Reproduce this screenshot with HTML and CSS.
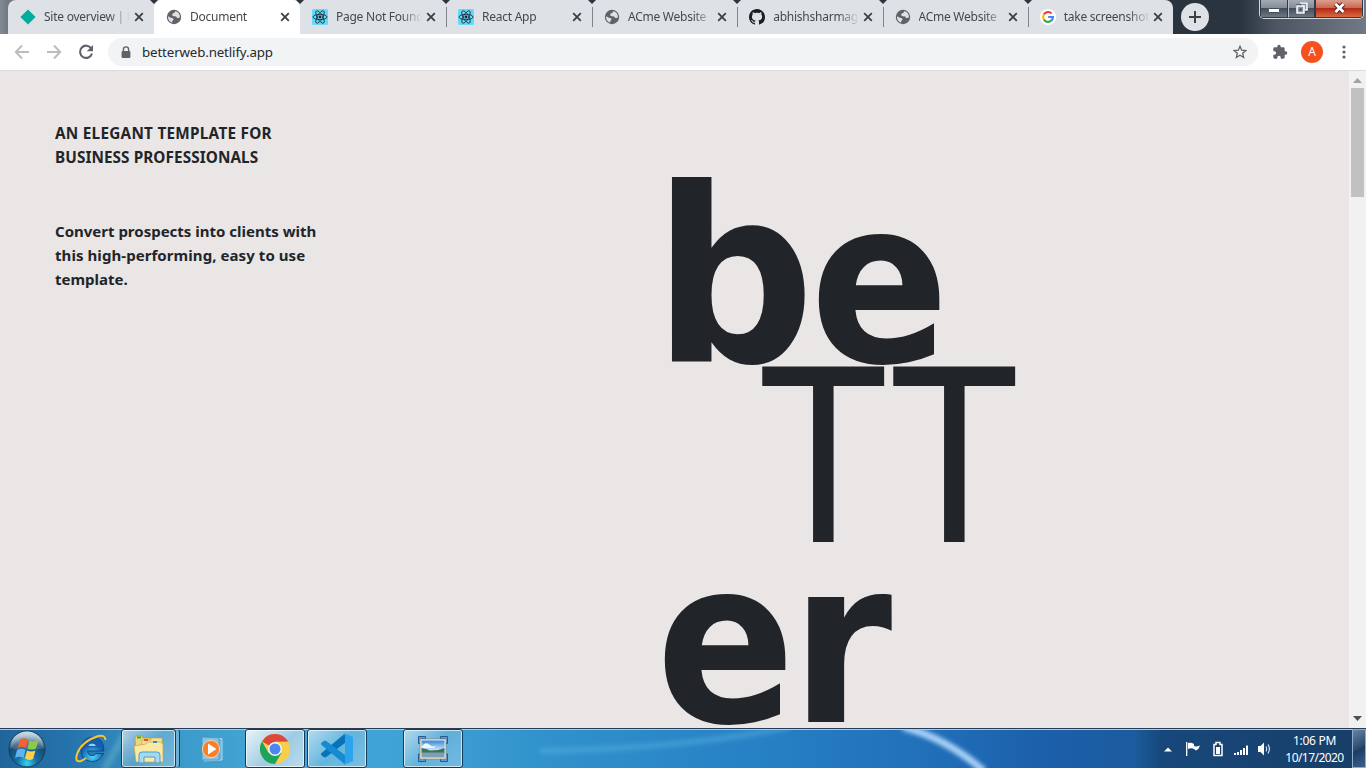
FILE: index.html
```html
<!DOCTYPE html>
<html lang="en">
<head>
<meta charset="utf-8">
<title>Document</title>
<link rel="stylesheet" href="styles.css">
</head>
<body>
<svg width="0" height="0" class="defs">
  <defs>
    <symbol id="x" viewBox="0 0 10 10"><path d="M1.2 1.2 8.8 8.8M8.8 1.2 1.2 8.8" stroke="#3c4043" stroke-width="1.8" fill="none"/></symbol>
    <symbol id="globe" viewBox="0 0 16 16"><circle cx="8" cy="8" r="7.2" fill="#5f6368"/><path d="M9.2 2.2 8.3 4 6.6 4.6 6.2 6.6 7.7 7.3 10.2 7.6 11 9l2.8-.3C14.3 5.500 12.400 2.800 9.200 2.200zM2.200 7.200 4.800 8.800 7 9.300 7.500 10.800 6.300 12 6.200 13.600C3.400 12.900 1.700 10.200 2.200 7.200z" fill="#dee1e6"/></symbol>
    <symbol id="react" viewBox="0 0 16 16"><rect width="16" height="16" rx="1.500" fill="#61dafb"/><g fill="none" stroke="#20232a" stroke-width=".8"><ellipse cx="8" cy="8" rx="7" ry="2.700"/><ellipse cx="8" cy="8" rx="7" ry="2.700" transform="rotate(60 8 8)"/><ellipse cx="8" cy="8" rx="7" ry="2.700" transform="rotate(120 8 8)"/></g><circle cx="8" cy="8" r="1.400" fill="#20232a"/></symbol>
  </defs>
</svg>

<header class="tabstrip">
  <div class="tabs">
    <div class="tab wide"><svg class="fav" viewBox="0 0 16 16"><path d="M8 .4 15.600 8 8 15.600 .4 8z" fill="#00ad9f"/></svg><span class="label">Site overview | b</span><svg class="close"><use href="#x"/></svg></div>
    <div class="tab wide active"><svg class="fav"><use href="#globe"/></svg><span class="label">Document</span><svg class="close"><use href="#x"/></svg></div>
    <div class="tab wide"><svg class="fav"><use href="#react"/></svg><span class="label">Page Not Found</span><svg class="close"><use href="#x"/></svg></div>
    <div class="tab wide sep"><svg class="fav"><use href="#react"/></svg><span class="label">React App</span><svg class="close"><use href="#x"/></svg></div>
    <div class="tab sep"><svg class="fav"><use href="#globe"/></svg><span class="label">ACme Website</span><svg class="close"><use href="#x"/></svg></div>
    <div class="tab sep"><svg class="fav" viewBox="0 0 16 16"><path fill="#1b1f23" fill-rule="evenodd" d="M8 0C3.580 0 0 3.580 0 8c0 3.540 2.290 6.530 5.470 7.590.4.070.55-.17.55-.38 0-.19-.01-.82-.01-1.490-2.010.37-2.530-.49-2.690-.94-.09-.23-.48-.94-.82-1.130-.28-.15-.68-.52-.01-.53.63-.01 1.080.58 1.230.82.72 1.210 1.870.87 2.330.66.070-.52.28-.87.51-1.070-1.780-.2-3.640-.89-3.640-3.950 0-.87.31-1.590.82-2.150-.08-.2-.36-1.020.08-2.120 0 0 .67-.21 2.200.82.64-.18 1.320-.27 2-.27s1.360.09 2 .27c1.530-1.040 2.200-.82 2.200-.82.44 1.100.16 1.920.08 2.120.51.56.82 1.270.82 2.150 0 3.070-1.870 3.750-3.650 3.950.29.25.54.73.54 1.480 0 1.070-.01 1.930-.01 2.200 0 .21.15.46.55.38A8.010 8.010 0 0 0 16 8c0-4.420-3.580-8-8-8z"/></svg><span class="label">abhishsharmag</span><svg class="close"><use href="#x"/></svg></div>
    <div class="tab sep"><svg class="fav"><use href="#globe"/></svg><span class="label">ACme Website</span><svg class="close"><use href="#x"/></svg></div>
    <div class="tab sep"><svg class="fav" viewBox="0 0 16 16"><circle cx="8" cy="8" r="8" fill="#fff"/><g fill="none" stroke-width="2.200"><path d="M11.600 4.500A4.900 4.900 0 0 0 3.800 5.500" stroke="#ea4335"/><path d="M3.800 5.500A4.900 4.900 0 0 0 3.800 10.500" stroke="#fbbc05"/><path d="M3.800 10.500A4.900 4.900 0 0 0 11.200 11.700" stroke="#34a853"/><path d="M11.200 11.700A4.900 4.900 0 0 0 12.900 8H8.200" stroke="#4285f4"/></g></svg><span class="label">take screenshot</span><svg class="close"><use href="#x"/></svg></div>
  </div>
  <div class="newtab"><svg width="12" height="12" viewBox="0 0 12 12"><path d="M6 0V12M0 6H12" stroke="#3c4043" stroke-width="2"/></svg></div>
  <div class="caption">
    <span class="cap"><svg width="12" height="12" viewBox="0 0 12 12"><rect x=".5" y="6.500" width="11" height="4" rx=".8" fill="#fff" stroke="#434a57"/></svg></span>
    <span class="cap restore"><svg width="12" height="12" viewBox="0 0 12 12"><path d="M4 1H11V8H9M1 4H8V11H1z" fill="none" stroke="#303642" stroke-width="3"/><path d="M4 1H11V8H9M1 4H8V11H1z" fill="#8991a0" stroke="#fff" stroke-width="1.600"/><rect x="3.500" y="6.500" width="2" height="2" fill="#303642"/></svg></span>
    <span class="cap shut"><svg width="13" height="12" viewBox="0 0 13 12"><path d="M2.500 2 10.500 10M10.500 2 2.500 10" stroke="#522" stroke-width="4.800"/><path d="M2.500 2 10.500 10M10.500 2 2.500 10" stroke="#fff" stroke-width="2.800"/></svg></span>
  </div>
</header>

<div class="toolbar">
  <div class="nav">
    <svg width="16" height="16" viewBox="0 0 16 16"><path d="M15 8H2M8 1.500 1.800 8 8 14.500" fill="none" stroke="#babcbe" stroke-width="1.900"/></svg>
    <svg width="16" height="16" viewBox="0 0 16 16"><path d="M1 8H14M8 1.500 14.200 8 8 14.500" fill="none" stroke="#babcbe" stroke-width="1.900"/></svg>
    <svg width="16" height="16" viewBox="0 0 16 16"><path d="M13.300 4.500A6.100 6.100 0 1 0 14 9.500" fill="none" stroke="#5f6368" stroke-width="2.100"/><path d="M15 1V7.200H8.800z" fill="#5f6368"/></svg>
  </div>
  <div class="omnibox">
    <svg width="10" height="13" viewBox="0 0 10 13"><path d="M2.400 6V3.500A2.600 2.600 0 0 1 7.600 3.500V6" fill="none" stroke="#5f6368" stroke-width="1.400"/><rect x=".6" y="5" width="8.800" height="7" rx="1" fill="#5f6368"/></svg>
    <span class="url">betterweb.netlify.app</span>
    <svg class="star" width="14" height="14" viewBox="0 0 14 14"><path d="M7 1.300 8.650 5.200 12.900 5.550 9.700 8.350 10.650 12.500 7 10.300 3.350 12.500 4.300 8.350 1.100 5.550 5.350 5.200z" fill="none" stroke="#5f6368" stroke-width="1.300"/></svg>
  </div>
  <svg class="puzzle" width="16" height="16" viewBox="0 0 24 24"><path fill="#5f6368" d="M20.500 11H19V7c0-1.100-.9-2-2-2h-4V3.500a2.500 2.500 0 0 0-5 0V5H4c-1.100 0-2 .9-2 2v3.800h1.500a2.700 2.700 0 0 1 0 5.400H2V20c0 1.100.9 2 2 2h3.800v-1.500a2.700 2.700 0 0 1 5.400 0V22H17c1.100 0 2-.9 2-2v-4h1.500a2.500 2.500 0 0 0 0-5z"/></svg>
  <span class="avatar">A</span>
  <svg class="dots" width="4" height="14" viewBox="0 0 4 14"><g fill="#5f6368"><circle cx="2" cy="2" r="1.600"/><circle cx="2" cy="7" r="1.600"/><circle cx="2" cy="12" r="1.600"/></g></svg>
</div>

<div class="viewport">
  <main class="hero">
    <section class="intro">
      <p class="t1">AN ELEGANT TEMPLATE FOR</p>
      <p class="t2">BUSINESS PROFESSIONALS</p>
      <p class="t3">Convert prospects into clients with</p>
      <p class="t4">this high-performing, easy to use</p>
      <p class="t5">template.</p>
    </section>
    <section class="brand">
      <div class="word first"><span class="b">b</span><span class="e">e</span></div>
      <div class="word thin"><span>T</span><span>T</span></div>
      <div class="word last"><span class="e">e</span><span class="r">r</span></div>
    </section>
  </main>
  <aside class="scroll">
    <svg width="9" height="5" viewBox="0 0 9 5"><path d="M0 5 4.500 0 9 5z" fill="#a3a3a3"/></svg>
    <div class="thumb"></div>
    <svg class="down" width="9" height="5" viewBox="0 0 9 5"><path d="M0 0H9L4.500 5z" fill="#505050"/></svg>
  </aside>
</div>

<footer class="taskbar">
  <svg class="wall" width="1366" height="39" viewBox="0 0 1366 39" preserveAspectRatio="none">
    <defs>
      <linearGradient id="bg"><stop offset="0" stop-color="#20659a"/><stop offset=".05" stop-color="#2573ac"/><stop offset=".12" stop-color="#3a98c8"/><stop offset=".2" stop-color="#45a8d7"/><stop offset=".3" stop-color="#3fa2d5"/><stop offset=".4" stop-color="#3192cb"/><stop offset=".55" stop-color="#2781c5"/><stop offset=".68" stop-color="#216fb9"/><stop offset=".76" stop-color="#1c60ab"/><stop offset=".83" stop-color="#1c5c9f"/><stop offset=".85" stop-color="#17487b"/><stop offset="1" stop-color="#173e68"/></linearGradient>
      <filter id="soft" x="-20%" y="-50%" width="140%" height="200%"><feGaussianBlur stdDeviation="2"/></filter>
    </defs>
    <rect width="1366" height="39" fill="url(#bg)"/>
    <path d="M903-2Q946 9 984 42" fill="none" stroke="#a9d2f8" stroke-width="7" filter="url(#soft)"/>
    <path d="M540 22Q680 20 790-2" fill="none" stroke="#61b7e5" stroke-opacity=".4" stroke-width="6" filter="url(#soft)"/>
    <path d="M104 41 125 5" stroke="#72c1cb" stroke-opacity=".4" stroke-width="7" filter="url(#soft)"/>
  </svg>
  <div class="apps">
    <svg class="start" width="38" height="38" viewBox="0 0 38 38">
      <defs><radialGradient id="orb" cx=".5" cy=".9" r=".8"><stop offset="0" stop-color="#35d4f0"/><stop offset=".35" stop-color="#146fa5"/><stop offset=".75" stop-color="#174a70"/><stop offset="1" stop-color="#8dabbc"/></radialGradient><linearGradient id="gloss" x2="0" y2="1"><stop offset="0" stop-color="#e4edf2" stop-opacity=".75"/><stop offset="1" stop-color="#a0bdcc" stop-opacity=".15"/></linearGradient></defs>
      <circle cx="19" cy="19" r="18" fill="url(#orb)" stroke="#173e5c"/><path d="M2.500 18A16.500 16.500 0 0 1 35.500 18Q19 23 2.500 18z" fill="url(#gloss)"/>
      <path d="M12 9.500Q16 7 20 9.500L18 18Q14 15.500 9.500 18z" fill="#ef6236"/><path d="M21.500 10.500Q26 12.500 30.500 10L28 18.500Q24 20.500 19.500 18.500z" fill="#92c84a"/><path d="M9 20Q13 17.500 17.500 20L15.500 28Q11.500 25.500 7 28z" fill="#5eb5ed"/><path d="M19 20.500Q23 22.500 27.500 20.500L25 29Q21 31 17 28.500z" fill="#ffd04b"/>
    </svg>
    <svg class="ie" width="34" height="32" viewBox="0 0 34 32">
      <defs><radialGradient id="ieb" cx=".5" cy=".8"><stop offset="0" stop-color="#49d7fb"/><stop offset="1" stop-color="#165fb0"/></radialGradient></defs>
      <path d="M31 18H14.500Q15 22.500 19 22.500Q21.500 22.500 23 20.500H30.500Q27 28.500 18.500 28.500Q7.500 27.500 8 16.500Q9 5 19 4Q31 4.500 31 18z" fill="url(#ieb)" stroke="#0b4a8b" stroke-width="1"/><path d="M14.500 13.500Q15.500 10 19 10Q23 10 23.700 13.500z" fill="#8dd4ef" stroke="#0b4a8b" stroke-width=".8"/>
      <path d="M32.500 7Q32 1.500 25.500 3Q9 8 4 21Q1.500 30 8 28Q10.500 27 13 25" fill="none" stroke="#f8c52f" stroke-width="2"/>
    </svg>
    <span class="task folder stacked"><svg width="34" height="30" viewBox="0 0 34 30">
      <path d="M3 4 4 2H10L11 4H27V26H4z" fill="#f1d57c" stroke="#b8942f" stroke-width=".7"/><path d="M10 6H19V4H30L31 26H8z" fill="#f6e08f" stroke="#c6a545" stroke-width=".7"/><path d="M2 12 14 10 15 8H28L31 10V28H4z" fill="#fae9a4" stroke="#c6a545" stroke-width=".7"/><rect x="5" y="2.500" width="4" height="2" fill="#2eb830"/><rect x="12" y="5" width="4" height="2" fill="#e2522c"/><rect x="21" y="7" width="4" height="2" fill="#2a8fda"/>
      <path d="M7 29V21Q7 18 10 18H25Q28 18 28 21V29H23V23H12V29z" fill="#a7d8ef" stroke="#4b9fcd"/>
    </svg></span>
    <span class="media"><svg width="30" height="28" viewBox="0 0 30 28"><path d="M8 3 25 3.500V25L7 26z" fill="#6fb8e0" stroke="#a6d6ef"/><path d="M5 2 22 3V25H5z" fill="#8ac3e4" stroke="#4c91bd" stroke-width=".8"/><circle cx="14" cy="14" r="8.600" fill="#f5822b" stroke="#fbd0a6"/><path d="M11 8.500V19.500L19.500 14z" fill="#fff"/></svg></span>
    <span class="task chrome"><svg width="30" height="30" viewBox="0 0 30 30"><circle cx="15" cy="15" r="15" fill="#fccd48"/><path d="M15 15 2 7.500A15 15 0 0 1 28 7.500H15z" fill="#dc483c"/><path d="M2 7.500A15 15 0 0 0 15 30L21.500 18.700 15 15 8.500 18.700z" fill="#1da35c"/><path d="M15 15 28 7.500H15z" fill="#fccd48"/><path d="M15 7.500H28L26 5H14z" fill="#dc483c"/><circle cx="15" cy="15" r="7" fill="#f2f5f7"/><circle cx="15" cy="15" r="5.500" fill="#4c87ee"/></svg></span>
    <span class="task code"><svg width="32" height="32" viewBox="0 0 32 32"><path d="M24 .5V10L4.500 24.500 2.500 24 0 21.800V20.500z" fill="#0873b9"/><path d="M24 31.500V22L4.500 7.500 2.500 8 0 10.200V11.500z" fill="#168bd1"/><path d="M24 .5 32 4V28L24 31.500Q23 32 22 30.500Q24 31 24 29V3Q24 1 22 1.500z" fill="#2ba3ed"/></svg></span>
    <span class="task photo"><svg width="30" height="26" viewBox="0 0 30 26"><defs><linearGradient id="sky" x2="0" y2="1"><stop offset="0" stop-color="#3787da"/><stop offset=".6" stop-color="#d4edfa"/></linearGradient></defs><g fill="#5b9bd3" stroke="#245b91"><path d="M.5.500H7.500V3H3V7.500H.5zM22.500.5H29.500V7.500H27V3H22.500zM.5 18H3V22.500H7.500V25.500H.5zM29.500 18H27V22.500H22.500V25.500H29.500z"/></g><rect x="2" y="3" width="26" height="20" fill="#f3f2ea" stroke="#8b8069" stroke-width=".7"/><rect x="3.500" y="4.500" width="23" height="17" fill="url(#sky)"/><path d="M4 10Q8 5 12 9T20 7L16 12H4z" fill="#eef8fc"/><path d="M3.500 12 8 13 12 14.500 20 14 26.500 12V17H3.500z" fill="#3b7559"/><path d="M3.500 16.500H26.500V21.500H3.500z" fill="#7d9eb3"/></svg></span>
  </div>
  <div class="tray">
    <svg width="110" height="18" viewBox="0 0 110 18">
      <path d="M2 11.500 6 7.500 10 11.500z" fill="#fff"/>
      <path d="M24.700 2V16" stroke="#fff" stroke-width="1.300"/><path d="M26 3Q29 2 32 4V6Q34 7 38 5.500Q37 9 34 10.500Q32 9 31 8.500Q28 8 26 9z" fill="#fff"/>
      <path d="M52 4.500H54V2.500H58V4.500H60V15.500H52z" fill="#173f6e" stroke="#fff" stroke-width="1.500"/><rect x="54" y="7" width="4" height="7" fill="#fff"/>
      <path d="M72 15V13H74V15zM75 15V12H77V15zM78 15V10H80V15zM81 15V8H83V15zM84 15V5.500H86V15z" fill="#fff"/>
      <path d="M96 6H98.500L102 2.500V15.500L98.500 12H96z" fill="#fff"/><path d="M104 6.500Q105.500 9 104 11.500M106 4.500Q108.800 9 106 13.500" fill="none" stroke="#e3edf8" stroke-width="1.100"/>
    </svg>
    <div class="clock"><span>1:06 PM</span><span class="date">10/17/2020</span></div>
    <div class="peek"></div>
  </div>
</footer>
</body>
</html>
```
FILE: styles.css
```css
* { box-sizing: border-box; }
body { margin: 0; width: 1366px; height: 768px; overflow: hidden; display: flex; flex-direction: column; font-family: "Noto Sans", sans-serif; color: #212529; }
p { margin: 0; }
svg { display: block; flex: none; }
.defs { position: absolute; }

.tabstrip { height: 34px; flex: none; display: flex; padding-left: 8px; background: linear-gradient(90deg, #858b94 0, #6f7883 8px, #2b3642 150px, #2a343f 1240px, #4c5662 1275px, #707984 1366px); }
.tabs { display: flex; width: 1165px; background: #dee1e6; border-radius: 8px 8px 0 0; }
.tab { flex: 1; display: flex; align-items: center; padding: 0 10px 0 12px; min-width: 0; position: relative; border-radius: 8px 8px 0 0; }
.tab.wide { flex: 0 0 146px; }
.tab + .tab::before { content: ""; position: absolute; left: -4px; top: 0; border: 4px solid transparent; border-top-color: #2b3540; border-bottom: 0; }
.tab.active { background: #fff; }
.tab.sep::after { content: ""; position: absolute; left: 0; top: 7px; width: 1px; height: 20px; background: #808388; }
.fav { width: 16px; height: 16px; margin-right: 8px; }
.label { flex: 1; font-size: 12px; letter-spacing: -.25px; line-height: 34px; white-space: nowrap; overflow: hidden; color: #45494d; -webkit-mask-image: linear-gradient(90deg, #000 65px, transparent 86px); mask-image: linear-gradient(90deg, #000 65px, transparent 86px); }
.close { width: 10px; height: 10px; margin-left: 4px; }
.newtab { width: 28px; height: 28px; margin: 3px 0 0 8px; border-radius: 50%; background: #dee1e6; display: grid; place-items: center; }
.caption { margin-left: auto; margin-right: 2px; height: 19px; width: 105px; display: flex; border: 1px solid #d3d7dc; border-top: 0; border-radius: 0 0 5px 5px; overflow: hidden; }
.cap { width: 28px; display: grid; place-items: center; padding-bottom: 1px; background: linear-gradient(#a5abb4, #858d99 45%, #454e5c 50%, #6d7683); border: 1px solid #303946; border-top: 0; }
.cap.restore { width: 27px; border-left-color: #b9bec6; }
.cap.shut { flex: 1; background: linear-gradient(#dd9e8d, #c96a53 45%, #b52b13 50%, #da6a42); }

.toolbar { height: 37px; flex: none; display: flex; align-items: center; background: #fff; border-bottom: 1px solid #dadce0; }
.nav { display: flex; gap: 16px; padding-left: 14px; width: 108px; }
.omnibox { width: 1150px; height: 28px; border-radius: 14px; background: #f1f3f4; display: flex; align-items: center; padding: 0 11px 0 13px; }
.url { font-size: 13.3px; margin-left: 11px; letter-spacing: -.13px; color: #26292d; }
.star { margin-left: auto; }
.puzzle { margin-left: 14px; }
.avatar { width: 22px; height: 22px; margin-left: 13px; border-radius: 50%; background: #f4511e; color: #fff; font-size: 12px; line-height: 22px; text-align: center; }
.dots { margin-left: 19px; }

.viewport { flex: 1; display: flex; min-height: 0; background: #eae6e5; overflow: hidden; }
.hero { width: 1349px; display: flex; overflow: hidden; }
.intro { width: 665px; padding: 50px 0 0 55px; font-size: 16px; line-height: 24px; font-weight: 700; white-space: nowrap; }
.t1 { letter-spacing: .26px; }
.t2 { letter-spacing: .08px; margin-bottom: 50px; }
.t1, .t2 { font-size: 15.3px; }
.t3, .t4, .t5 { letter-spacing: 0; font-size: 15px; }
.t4 { letter-spacing: .07px; }
.brand { padding-top: 117px; font-family: "DejaVu Sans", sans-serif; font-size: 243px; line-height: 180px; }
.word { height: 180px; display: flex; align-items: baseline; font-weight: 700; }
.word span { display: block; width: 131px; transform-origin: 0 0; }
.word .b { width: 145px; transform: translateX(-12px) scaleX(.93); }
.word .e { font-size: 228px; transform: scaleX(.9); }
.word .r { font-size: 228px; transform: scaleX(.9); }
.thin { font-family: "Noto Sans", sans-serif; font-weight: 400; font-size: 245px; padding-left: 95px; margin: -11px 0 16px; }
.thin span { transform: scaleX(.93); }
.last { margin-left: -9px; }
.last .e { width: 135px; }
.scroll { width: 17px; background: #f1f1f1; display: flex; flex-direction: column; align-items: center; padding: 7px 0; }
.thumb { width: 13px; height: 109px; margin-top: 5px; background: #c1c1c1; }
.down { margin-top: auto; }

.taskbar { height: 40px; flex: none; position: relative; display: flex; border-top: 1px solid #263c57; overflow: hidden; }
.wall { position: absolute; left: 0; top: 0; }
.apps, .tray { position: relative; display: flex; align-items: center; box-shadow: inset 0 1px #a7cce5; }
.apps { flex: 1; padding-left: 8px; }
.ie { margin-left: 27px; }
.task { height: 39px; width: 60px; display: grid; place-items: center; border: 1px solid #173a58; border-radius: 3px; background: linear-gradient(135deg, rgba(255,255,255,.6), rgba(255,255,255,.18) 50%, rgba(255,255,255,.3)); box-shadow: inset 0 0 0 1px rgba(255,255,255,.65); }
.folder { width: 55px; margin-left: 14px; }
.stacked { box-shadow: inset 0 0 0 1px rgba(255,255,255,.65), 4px 0 0 -1px #6fb1d6, 5px 0 0 -1px #173a58; }
.media { margin-left: 21px; width: 48px; }
.chrome { background: linear-gradient(135deg, #e9f4fa, #9ecbe3 55%, #b9dcec); }
.code { margin-left: 2px; }
.photo { margin-left: 36px; }
.clock { width: 71px; margin-left: 7px; display: flex; flex-direction: column; align-items: center; font-size: 12px; line-height: 17px; color: #fff; letter-spacing: -.3px; }
.date { letter-spacing: -.55px; }
.peek { width: 14px; height: 39px; margin-left: 2px; border: 1px solid #8facc8; background: linear-gradient(150deg, #6884a1, #28486c 50%, #1a3d66 52%, #3c6088); }
```
